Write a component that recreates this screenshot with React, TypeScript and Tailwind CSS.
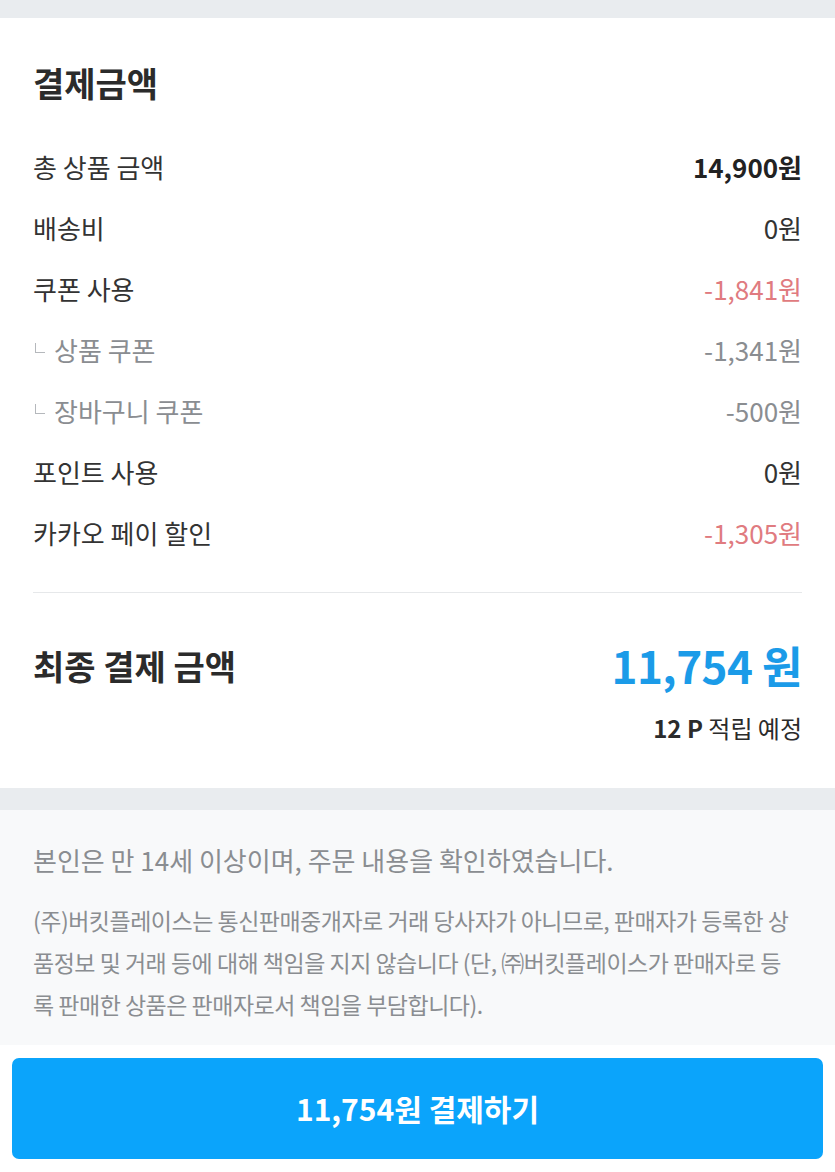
import React from "react";

interface Row {
  label: string;
  value: string;
  sub?: boolean;
  tone?: "bold" | "red" | "gray" | "normal";
}

const rows: Row[] = [
  { label: "총 상품 금액", value: "14,900원", tone: "bold" },
  { label: "배송비", value: "0원" },
  { label: "쿠폰 사용", value: "-1,841원", tone: "red" },
  { label: "상품 쿠폰", value: "-1,341원", sub: true, tone: "gray" },
  { label: "장바구니 쿠폰", value: "-500원", sub: true, tone: "gray" },
  { label: "포인트 사용", value: "0원" },
  { label: "카카오 페이 할인", value: "-1,305원", tone: "red" },
];

const valueClass = (tone?: Row["tone"]) => {
  if (tone === "bold") return "font-bold text-[#222]";
  if (tone === "red") return "text-[#e07b80]";
  if (tone === "gray") return "text-[#8a8d91]";
  return "text-[#333]";
};

export default function App() {
  return (
    <div className="w-[835px] h-[1172px] bg-white font-['Noto_Sans_CJK_KR','Noto_Sans',sans-serif] overflow-hidden">
      <div className="h-[18px] bg-[#e9ecef]" />

      {/* 결제금액 */}
      <section className="px-[33px] pt-[43px] pb-[45px] bg-white">
        <h2 className="text-[34px] leading-[44px] font-bold text-[#2b2b2b]">결제금액</h2>

        <div className="mt-[31px]">
          {rows.map((row) => (
            <div key={row.label} className="h-[61px] flex items-center justify-between text-[26px]">
              {row.sub ? (
                <div className="flex items-center text-[#8a8d91]">
                  <span className="w-[10px] h-[10px] border-l border-b border-[#b5b8bc] ml-[2px] mr-[9px] -mt-[4px]" />
                  {row.label}
                </div>
              ) : (
                <div className="text-[#333]">{row.label}</div>
              )}
              <div className={valueClass(row.tone)}>{row.value}</div>
            </div>
          ))}
        </div>

        <div className="mt-[29px] border-t border-[#e6e8ea]" />

        <div className="mt-[42px] h-[60px] flex items-center justify-between">
          <div className="text-[34px] font-bold text-[#2b2b2b]">최종 결제 금액</div>
          <div className="text-[44px] font-bold text-[#1b9be8] tracking-[-0.5px]">11,754 원</div>
        </div>
        <div className="mt-[18px] text-right text-[24px] leading-[30px] text-[#2b2b2b]">
          <span className="font-bold">12 P</span> 적립 예정
        </div>
      </section>

      <div className="h-[22px] bg-[#e9ecef]" />

      {/* 안내 */}
      <section className="bg-[#f8f9fa] px-[33px] pt-[33px] pb-[20px] text-[#8a8d91]">
        <p className="text-[26px] leading-[34px]">본인은 만 14세 이상이며, 주문 내용을 확인하였습니다.</p>
        <p className="mt-[22px] text-[23px] leading-[42px] tracking-[-0.5px] whitespace-nowrap">
          (주)버킷플레이스는 통신판매중개자로 거래 당사자가 아니므로, 판매자가 등록한 상
          <br />
          품정보 및 거래 등에 대해 책임을 지지 않습니다 (단, ㈜버킷플레이스가 판매자로 등
          <br />
          록 판매한 상품은 판매자로서 책임을 부담합니다).
        </p>
      </section>

      <div className="px-[12px] pt-[13px]">
        <button className="w-full h-[101px] rounded-[7px] bg-[#0ba4fb] text-white text-[30px] font-bold">
          11,754원 결제하기
        </button>
      </div>
    </div>
  );
}
